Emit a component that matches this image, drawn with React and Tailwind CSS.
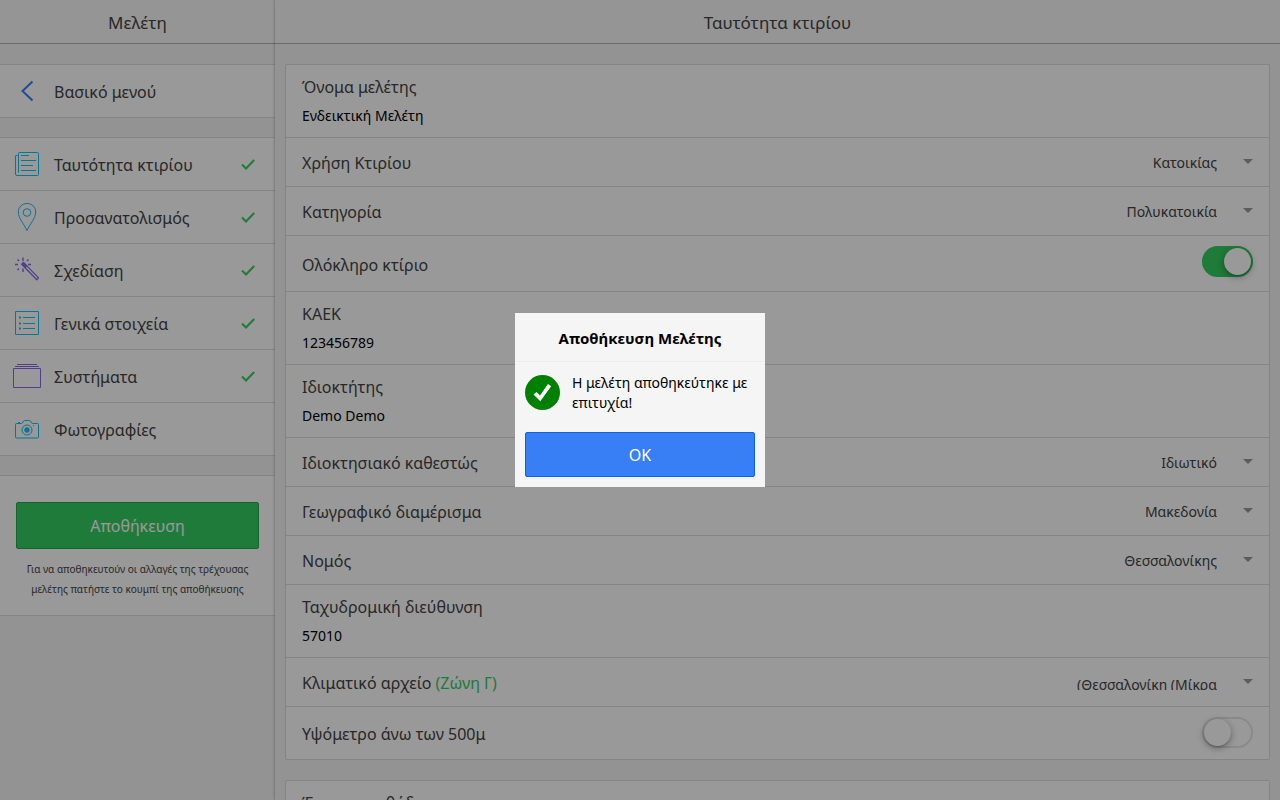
import React, { useId, useState } from "react";

function Icon({ children, className }) {
  return (
    <svg
      viewBox="0 0 32 32"
      className={`size-8 shrink-0 ${className}`}
      fill="none"
      stroke="currentColor"
      strokeWidth="1"
      aria-hidden="true"
    >
      {children}
    </svg>
  );
}

const PaperIcon = () => (
  <Icon className="text-[#11c1f3]">
    <path d="M8.500 4.500h18a1 1 0 0 1 1 1v21a1 1 0 0 1-1 1H6a1.500 1.500 0 0 1-1.500-1.500V8a.5.5 0 0 1 .5-.5h1.500M7.500 24.500v-19a1 1 0 0 1 1-1" />
    <path d="M10 7.500h8M10 12.500h15M10 17.500h12M10 22.500h15" />
  </Icon>
);

const PinIcon = () => (
  <Icon className="text-[#11c1f3]">
    <path d="M16 2.500c-4.900 0-8.700 3.700-8.700 8.500 0 6.200 6 12.400 8.700 18.500 2.700-6.100 8.700-12.300 8.700-18.500 0-4.800-3.800-8.500-8.700-8.500z" />
    <circle cx="16" cy="11.500" r="3.800" />
  </Icon>
);

const WandIcon = () => (
  <Icon className="text-[#886aea]">
    <path d="M12 3.500v3.500M4 10.500h3M17 10.500h3M12 14.500v3.500M6.500 5.500l1.500 1.500M17.500 5.500l-1.500 1.500M6.500 16l1.500-1.500" strokeWidth="1.400" />
    <path d="M10.700 10.200l1.800-1.800 15 15.500-1.800 1.800z" strokeWidth="1.300" strokeLinejoin="round" />
    <path d="M10.700 10.200l1.800-1.800 3.500 3.500-1.800 1.800z" fill="currentColor" />
  </Icon>
);

const ListIcon = () => (
  <Icon className="text-[#11c1f3]">
    <path d="M4.500 4.500h23v23h-23z" />
    <path d="M12 10.500h12M12 16.500h12M12 21.500h12" />
    <path d="M8 10.500h2M8 16.500h2M8 21.500h2" strokeWidth="2" />
  </Icon>
);

const StackIcon = () => (
  <Icon className="text-[#886aea]">
    <path d="M2.500 8.500h27v19h-27zM4 6.500h24M6 4.500h20" />
  </Icon>
);

const CameraIcon = () => (
  <Icon className="text-[#11c1f3]">
    <path d="M5.500 10.500h5c1.500 0 1.500-3 3-3h5c1.500 0 1.500 3 3 3h5a1 1 0 0 1 1 1v12.500a1 1 0 0 1-1 1h-21a1 1 0 0 1-1-1v-12.500a1 1 0 0 1 1-1zM7 9.500h2" />
    <circle cx="16" cy="17" r="5" />
    <circle cx="16" cy="17" r="2.300" fill="currentColor" />
    <path d="M22 12.500h1" />
  </Icon>
);

const CheckIcon = () => (
  <svg viewBox="0 0 14 12" className="h-3 w-3.5 shrink-0 text-[#33cd5f]" fill="none" stroke="currentColor" strokeWidth="2" aria-hidden="true">
    <path d="M1 6.500l4 4L13.200 2" />
  </svg>
);

const menu = [
  { label: "Ταυτότητα κτιρίου", icon: PaperIcon, done: true },
  { label: "Προσανατολισμός", icon: PinIcon, done: true },
  { label: "Σχεδίαση", icon: WandIcon, done: true },
  { label: "Γενικά στοιχεία", icon: ListIcon, done: true },
  { label: "Συστήματα", icon: StackIcon, done: true },
  { label: "Φωτογραφίες", icon: CameraIcon, done: false },
];

function MenuLink({ icon: ItemIcon, label, done }) {
  return (
    <a href="#" className="flex h-[53px] items-center border-b border-[#ddd] bg-white pr-5 pl-[11px]">
      <ItemIcon />
      <span className="ml-[11px] flex-1 pt-0.5">{label}</span>
      {done && <CheckIcon />}
    </a>
  );
}

function TextRow({ label, value }) {
  const id = useId();
  return (
    <div className="flex h-[73px] flex-col border-b border-[#ddd] px-4 pt-2.5">
      <label htmlFor={id} className="leading-6">{label}</label>
      <input id={id} defaultValue={value} className="mt-1 h-6 w-full bg-transparent text-sm text-black outline-none" />
    </div>
  );
}

function SelectRow({ label, note, value, clipped }) {
  const id = useId();
  return (
    <div className="flex h-[49px] items-center border-b border-[#ddd] px-4">
      <label htmlFor={id} className="flex-1 pt-0.5">
        {label}
        {note && <span className="text-[#33cd5f]"> {note}</span>}
      </label>
      <div className={clipped ? "h-[15px] overflow-hidden" : "h-[18px]"}>
        <select id={id} defaultValue={value} className="block h-5 appearance-none bg-transparent text-right text-sm leading-5 outline-none [text-align-last:right]">
          <option>{value}</option>
        </select>
      </div>
      <svg viewBox="0 0 10 5" className="mb-0.5 ml-[26px] h-[5px] w-2.5" aria-hidden="true">
        <path d="M0 0h10L5 5z" fill="#999" />
      </svg>
    </div>
  );
}

function ToggleRow({ label, on, className }) {
  const id = useId();
  return (
    <div className={`flex justify-between border-b border-[#ddd] px-4 ${className}`}>
      <label htmlFor={id} className="self-center pt-0.5">{label}</label>
      <input
        id={id}
        type="checkbox"
        defaultChecked={on}
        className="mt-2.5 flex h-[31px] w-[51px] appearance-none items-center rounded-full border-2 border-[#e6e6e6] bg-white before:block before:size-[27px] before:rounded-full before:bg-white before:shadow-[0_2px_7px_rgba(0,0,0,0.35),0_1px_1px_rgba(0,0,0,0.15)] checked:justify-end checked:border-[#33cd5f] checked:bg-[#33cd5f]"
      />
    </div>
  );
}

function Title({ children }) {
  return (
    <header className="flex h-11 shrink-0 items-center justify-center border-b border-[#b2b2b2] bg-[#f8f8f8] pt-0.5 text-[17px]">
      <h1>{children}</h1>
    </header>
  );
}

function SaveDialog({ onClose }) {
  return (
    <div className="fixed inset-0 z-10 flex items-center justify-center bg-black/40">
      <div role="dialog" aria-modal="true" aria-labelledby="save-title" className="w-[250px] bg-[#f5f5f5] text-black">
        <h2 id="save-title" className="border-b border-[#eee] pt-[15px] pb-[13px] text-center text-[15px] leading-5 font-bold">
          Αποθήκευση Μελέτης
        </h2>
        <div className="flex items-start gap-3 px-2.5 pt-[11px] text-sm leading-5">
          <svg viewBox="0 0 35 35" className="mt-0.5 size-[35px] shrink-0" aria-hidden="true">
            <circle cx="17.500" cy="17.500" r="17.500" fill="#008000" />
            <path d="M8.500 19.500l3-2.500 3.500 3.500 8-11.500 3.200 2.300-10.900 15z" fill="#fff" />
          </svg>
          <p>Η μελέτη αποθηκεύτηκε με επιτυχία!</p>
        </div>
        <div className="px-2.5 pt-[19px] pb-2.5">
          <button type="button" onClick={onClose} className="h-[45px] w-full rounded-xs border border-[#0c60ee] bg-[#387ef5] text-white">
            OK
          </button>
        </div>
      </div>
    </div>
  );
}

export default function App() {
  const [open, setOpen] = useState(true);
  return (
    <div className="flex h-screen overflow-hidden bg-[#f5f5f5] font-['Noto_Sans','Open_Sans',sans-serif] text-base leading-5 text-[#444]">
      <aside className="flex w-[275px] shrink-0 flex-col">
        <Title>Μελέτη</Title>
        <nav className="mt-5">
          <a href="#" className="flex h-[54px] items-center border-y border-[#ddd] bg-white pl-[11px]">
            <Icon className="text-[#387ef5]">
              <path d="M21.500 6.500L11.500 16l10 9.500" strokeWidth="2" />
            </Icon>
            <span className="ml-[11px] pt-0.5">Βασικό μενού</span>
          </a>
          <div className="mt-[19px] border-t border-[#ddd]">
            {menu.map((item) => (
              <MenuLink key={item.label} {...item} />
            ))}
          </div>
        </nav>
        <section className="mt-[19px] border-y border-[#ddd] bg-white px-4 pt-[26px] pb-4">
          <button type="button" className="h-[47px] w-full rounded-xs border border-[#28a54c] bg-[#33cd5f] text-white">
            Αποθήκευση
          </button>
          <p className="mt-2.5 text-center text-[10px] leading-5">
            Για να αποθηκευτούν οι αλλαγές της τρέχουσας μελέτης πατήστε το κουμπί της αποθήκευσης
          </p>
        </section>
      </aside>
      <main className="z-[1] flex min-w-0 flex-1 flex-col bg-[#f5f5f5] shadow-[-1px_0_2px_rgba(0,0,0,0.2)]">
        <Title>Ταυτότητα κτιρίου</Title>
        <form className="flex flex-col gap-5 overflow-hidden px-2.5 pt-5">
          <div className="shrink-0 rounded-xs border border-b-0 border-[#ddd] bg-white">
            <TextRow label="Όνομα μελέτης" value="Ενδεικτική Μελέτη" />
            <SelectRow label="Χρήση Κτιρίου" value="Κατοικίας" />
            <SelectRow label="Κατηγορία" value="Πολυκατοικία" />
            <ToggleRow label="Ολόκληρο κτίριο" on className="h-14" />
            <TextRow label="ΚΑΕΚ" value="123456789" />
            <TextRow label="Ιδιοκτήτης" value="Demo Demo" />
            <SelectRow label="Ιδιοκτησιακό καθεστώς" value="Ιδιωτικό" />
            <SelectRow label="Γεωγραφικό διαμέρισμα" value="Μακεδονία" />
            <SelectRow label="Νομός" value="Θεσσαλονίκης" />
            <TextRow label="Ταχυδρομική διεύθυνση" value="57010" />
            <SelectRow label="Κλιματικό αρχείο" note="(Ζώνη Γ)" value="(Θεσσαλονίκη (Μίκρα" clipped />
            <ToggleRow label="Υψόμετρο άνω των 500μ" className="h-[53px]" />
          </div>
          <div className="shrink-0 rounded-xs border border-[#ddd] bg-white">
            <TextRow label="Έγκριση μεθόδου" value="" />
          </div>
        </form>
      </main>
      {open && <SaveDialog onClose={() => setOpen(false)} />}
    </div>
  );
}
